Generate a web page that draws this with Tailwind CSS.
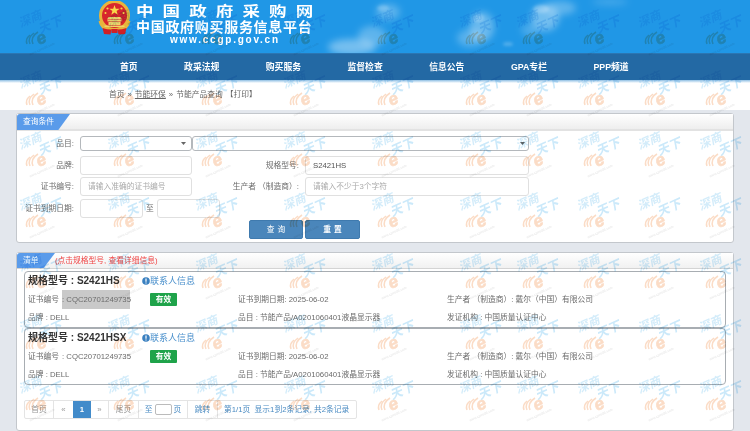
<!DOCTYPE html>
<html lang="zh-CN">
  <head>
    <meta charset="UTF-8" />
    <meta name="viewport" content="width=device-width, initial-scale=1.0" />
    <title>节能产品查询</title>
    <script src="https://cdn.jsdelivr.net/npm/@tailwindcss/browser@4"></script>
  </head>
  <body class="relative h-[431px] w-[750px] overflow-hidden bg-white text-[7.750px] leading-none text-[#6b6b6b] font-['Liberation_Sans','Noto_Sans_CJK_SC',sans-serif]">
    <!-- banner -->
    <header class="relative h-[53px] overflow-hidden bg-[#2097e6]">
      <svg class="absolute inset-0 h-full w-full" viewBox="0 0 750 53" aria-hidden="true">
        <defs>
          <filter id="soft"><feGaussianBlur stdDeviation="3.500" /></filter>
          <filter id="softer"><feGaussianBlur stdDeviation="1.800" /></filter>
        </defs>
        <g fill="#fff" filter="url(#soft)">
          <ellipse cx="352" cy="47" rx="24" ry="8" opacity=".38" />
          <ellipse cx="372" cy="36" rx="14" ry="10" opacity=".28" />
          <ellipse cx="388" cy="12" rx="12" ry="8" opacity=".26" />
          <ellipse cx="482" cy="27" rx="12" ry="15" opacity=".32" />
          <ellipse cx="470" cy="38" rx="13" ry="9" opacity=".25" />
          <ellipse cx="545" cy="18" rx="14" ry="13" opacity=".36" />
          <ellipse cx="560" cy="8" rx="16" ry="7" opacity=".28" />
          <ellipse cx="530" cy="30" rx="9" ry="6" opacity=".2" />
          <ellipse cx="610" cy="2" rx="18" ry="3" opacity=".18" />
        </g>
        <g fill="#fff" filter="url(#softer)">
          <ellipse cx="383" cy="8" rx="6" ry="3" opacity=".22" />
          <ellipse cx="478" cy="18" rx="6" ry="4" opacity=".22" />
          <ellipse cx="508" cy="44" rx="5" ry="2" opacity=".22" />
          <ellipse cx="541" cy="9" rx="8" ry="4" opacity=".25" />
        </g>
      </svg>
      <svg class="absolute left-[97px] top-[1px] h-[35px] w-[36px]" viewBox="0 0 36 35" aria-hidden="true">
        <circle cx="17.500" cy="14.500" r="14" fill="#d8262c" stroke="#e8b53c" stroke-width="3" />
        <path d="M3 20c1 5 5 9 10 10M32 20c-1 5-5 9-10 10" fill="none" stroke="#e8b53c" stroke-width="3" />
        <path d="M17.500 4l1.300 3.700h3.900l-3.100 2.400 1.100 3.700-3.200-2.200-3.200 2.200 1.100-3.700-3.100-2.400h3.900z" fill="#f8d84a" />
        <g fill="#f8d84a">
          <circle cx="10.500" cy="7.500" r="1.100" />
          <circle cx="24.500" cy="7.500" r="1.100" />
          <circle cx="8.500" cy="12" r="1" />
          <circle cx="26.500" cy="12" r="1" />
        </g>
        <path d="M11.500 16h12l1.500 2.500H10zM10.500 19h14v1.500h-14zM11.500 21h12v3h-12z" fill="#f3d36a" />
        <path d="M7.500 24.500h20V26h-20z" fill="#f3d36a" />
        <path d="M5.500 27c3 1 6 1.500 9 1.500l-1 5-6.500-.5zM29.500 27c-3 1-6 1.500-9 1.500l1 5 6.500-.5zM14.500 28h6v4h-6z" fill="#cf2027" />
      </svg>
      <div class="absolute left-[136px] top-[4px] origin-left scale-x-[1.250] text-[14px] font-bold tracking-[7.300px] text-white whitespace-nowrap">中国政府采购网</div>
      <div class="absolute left-[136px] top-[20px] text-[14px] font-bold tracking-[.700px] text-white whitespace-nowrap">中国政府购买服务信息平台</div>
      <div class="absolute left-[170px] top-[35px] text-[10px] font-bold tracking-[1.760px] text-white whitespace-nowrap">www.ccgp.gov.cn</div>
    </header>

    <nav class="flex h-[27px] items-center gap-[46.500px] border-t border-[#2b76b3] bg-[#2369a4] pl-[120px] text-[8.800px] font-bold text-white whitespace-nowrap">
      <a>首页</a><a>政采法规</a><a>购买服务</a><a>监督检查</a><a>信息公告</a><a>GPA专栏</a><a>PPP频道</a>
    </nav>
    <div class="h-[3px] bg-gradient-to-b from-[#8fbfe3] to-white"></div>

    <div class="flex h-[27px] items-center gap-[3px] pb-[3px] pl-[109px] text-[#666]">
      <span>首页</span><span>»</span><span class="underline">节能环保</span><span>»</span><span>节能产品查询</span><span>【打印】</span>
    </div>

    <main class="h-[321px] bg-[#e3e7ed] px-[16px] pt-[3px]">
      <!-- search form -->
      <section class="h-[130px] rounded-[3px] border border-[#c3c7cc] bg-white">
        <div class="h-[17px] border-b-2 border-[#e2e2e2] bg-gradient-to-b from-white to-[#eeeeee]">
          <div class="flex h-[16px] w-[53px] items-center rounded-tl-[3px] bg-[#5a9bea] pl-[6px] text-white [clip-path:polygon(0_0,100%_0,78%_100%,0_100%)]">查询条件</div>
        </div>
        <div class="mt-[5px] flex h-[15px] items-center">
          <label class="w-[58px] pr-[1px] text-right">品目:</label>
          <div class="ml-[5px] flex h-full w-[112px] items-center justify-end rounded-[3px] border border-[#b4b8bc] bg-white pr-[5px]">
            <svg class="h-[3px] w-[5px]" viewBox="0 0 5 3"><path d="M0 0h5L2.500 3z" fill="#666" /></svg>
          </div>
          <div class="flex h-full w-[337px] items-center justify-end rounded-[3px] border border-[#b4b8bc] bg-white pr-[3px]">
            <svg class="h-[3px] w-[5px]" viewBox="0 0 5 3"><path d="M0 0h5L2.500 3z" fill="#666" /></svg>
          </div>
        </div>
        <div class="mt-[5px] flex h-[19px] items-center">
          <label class="w-[58px] pr-[1px] text-right">品牌:</label>
          <input class="ml-[5px] h-full w-[112px] rounded-[3px] border border-[#e0e0e0] px-[7px]" />
          <label class="w-[108px] pr-[1px] text-right">规格型号:</label>
          <input class="ml-[5px] h-full w-[224px] rounded-[3px] border border-[#e0e0e0] px-[7px] text-[#555]" value="S2421HS" />
        </div>
        <div class="mt-[2px] flex h-[19px] items-center">
          <label class="w-[58px] pr-[1px] text-right">证书编号:</label>
          <input class="ml-[5px] h-full w-[112px] rounded-[3px] border border-[#e0e0e0] px-[7px] placeholder:text-[#aaa]" placeholder="请输入准确的证书编号" />
          <label class="w-[108px] pr-[1px] text-right">生产者 （制造商）:</label>
          <input class="ml-[5px] h-full w-[224px] rounded-[3px] border border-[#e0e0e0] px-[7px] placeholder:text-[#aaa]" placeholder="请输入不少于3个字符" />
        </div>
        <div class="mt-[3px] flex h-[19px] items-center">
          <label class="w-[58px] pr-[1px] text-right">证书到期日期:</label>
          <input class="ml-[5px] h-full w-[63px] rounded-[3px] border border-[#e0e0e0]" />
          <span class="w-[14px] text-center">至</span>
          <input class="h-full w-[63px] rounded-[3px] border border-[#e0e0e0]" />
        </div>
        <div class="mt-[2px] flex h-[19px] gap-[2px] pl-[232px]">
          <button class="w-[54px] rounded-[2px] border border-[#3f7aae] bg-[#4a86bb] pl-[3px] tracking-[3px] text-white">查询</button>
          <button class="w-[55px] rounded-[2px] border border-[#3f7aae] bg-[#4a86bb] pl-[3px] font-bold tracking-[3px] text-white">重置</button>
        </div>
      </section>

      <!-- result list -->
      <section class="mt-[9px] h-[179px] rounded-[3px] border border-[#c3c7cc] bg-white">
        <div class="flex h-[16px] items-center border-b border-[#d4d4d4] bg-gradient-to-b from-white to-[#f1f1f1]">
          <div class="flex h-full w-[38px] items-center rounded-tl-[3px] bg-[#5a9bea] pl-[6px] text-white [clip-path:polygon(0_0,100%_0,70%_100%,0_100%)]">清单</div>
          <span class="text-[#f04545]">(点击规格型号, 查看详细信息)</span>
        </div>
        <div class="mx-[7px] mt-[2px]">
          <article class="h-[57px] rounded-[4px] border border-[#a8adb2] px-[3px]">
            <div class="flex h-[18px] items-center">
              <h3 class="w-[114px] text-[10px] font-bold text-[#333] whitespace-nowrap">规格型号 : S2421HS</h3>
              <svg class="h-[8px] w-[8px] shrink-0" viewBox="0 0 8 8"><circle cx="4" cy="4" r="3.800" fill="#3a80c0" /><path d="M3.400 1.500h1.200v3.200H3.400zM3.400 5.400h1.200v1.200H3.400z" fill="#fff" /></svg>
              <span class="text-[9px] text-[#4a90cc]">联系人信息</span>
            </div>
            <div class="grid h-[19px] grid-cols-[210px_209px_1fr] items-center">
              <div class="flex items-center">
                <span>证书编号</span>
                <span class="ml-[3px] flex h-[19px] w-[68px] items-center bg-[#c9c9c9] whitespace-nowrap">: CQC20701249735</span>
                <span class="ml-[20px] flex h-[13px] w-[27px] items-center justify-center rounded-[1px] bg-[#1fa34a] font-bold text-white">有效</span>
              </div>
              <div>证书到期日期: 2025-06-02</div>
              <div>生产者 （制造商）: 戴尔（中国）有限公司</div>
            </div>
            <div class="grid h-[18px] grid-cols-[210px_209px_1fr] items-center">
              <div>品牌 : DELL</div>
              <div>品目 : 节能产品/A0201060401液晶显示器</div>
              <div>发证机构 : 中国质量认证中心</div>
            </div>
          </article>
          <article class="h-[57px] rounded-[4px] border border-[#a8adb2] px-[3px]">
            <div class="flex h-[18px] items-center">
              <h3 class="w-[114px] text-[10px] font-bold text-[#333] whitespace-nowrap">规格型号 : S2421HSX</h3>
              <svg class="h-[8px] w-[8px] shrink-0" viewBox="0 0 8 8"><circle cx="4" cy="4" r="3.800" fill="#3a80c0" /><path d="M3.400 1.500h1.200v3.200H3.400zM3.400 5.400h1.200v1.200H3.400z" fill="#fff" /></svg>
              <span class="text-[9px] text-[#4a90cc]">联系人信息</span>
            </div>
            <div class="grid h-[19px] grid-cols-[210px_209px_1fr] items-center">
              <div class="flex items-center">
                <span>证书编号</span>
                <span class="ml-[3px] flex w-[68px] items-center whitespace-nowrap">: CQC20701249735</span>
                <span class="ml-[20px] flex h-[13px] w-[27px] items-center justify-center rounded-[1px] bg-[#1fa34a] font-bold text-white">有效</span>
              </div>
              <div>证书到期日期: 2025-06-02</div>
              <div>生产者 （制造商）: 戴尔（中国）有限公司</div>
            </div>
            <div class="grid h-[18px] grid-cols-[210px_209px_1fr] items-center">
              <div>品牌 : DELL</div>
              <div>品目 : 节能产品/A0201060401液晶显示器</div>
              <div>发证机构 : 中国质量认证中心</div>
            </div>
          </article>
        </div>
        <div class="ml-[7px] mt-[15px] flex h-[19px] w-[333px] items-stretch rounded-[2px] border border-[#e4e4e4] text-[#999] whitespace-nowrap">
          <span class="flex w-[29px] items-center justify-center border-r border-[#e4e4e4]">首页</span>
          <span class="flex w-[19px] items-center justify-center">«</span>
          <span class="flex w-[18px] items-center justify-center bg-[#428bca] font-bold text-white">1</span>
          <span class="flex w-[18px] items-center justify-center border-r border-[#e4e4e4]">»</span>
          <span class="flex w-[30px] items-center justify-center border-r border-[#e4e4e4]">尾页</span>
          <span class="flex w-[49px] items-center justify-center gap-[2px] border-r border-[#e4e4e4] text-[#4a8bc2]">至<i class="h-[11px] w-[17px] rounded-[2px] border border-[#bbb] bg-white"></i>页</span>
          <span class="flex w-[30px] items-center justify-center border-r border-[#e4e4e4] text-[#4a8bc2]">跳转</span>
          <span class="flex flex-1 items-center pl-[6px] text-[#4a8bc2]">第1/1页&nbsp; 显示1到2条记录, 共2条记录</span>
        </div>
      </section>
    </main>

    <!-- site watermark laid over the whole page -->
    <svg class="pointer-events-none absolute inset-0 h-full w-full mix-blend-multiply" aria-hidden="true">
      <defs>
        <g id="mark" font-weight="700" font-style="italic" text-anchor="middle" dominant-baseline="central">
          <text transform="translate(18 11) rotate(-24)" font-size="12" fill="#d3ecfa">深商</text>
          <text transform="translate(38 17) rotate(-24)" font-size="12.500" fill="#cbe9fa">天下</text>
          <text transform="translate(29 30) rotate(-24)" font-size="17" stroke="#fbdcc6" stroke-width=".6" fill="#fbdcc6">e</text>
          <path d="M21 36q-3-7 5-12M18 36q-3-6 4-11M15 36q-2-5 3-9" fill="none" stroke="#fbdcc6" stroke-width="1.500" />
          <text transform="translate(30 41) rotate(-24)" font-size="3.400" font-style="normal" font-weight="400" fill="#e2e2e2">www.szms88.com</text>
        </g>
        <pattern id="wmLeft" x="12" y="8" width="88" height="61" patternUnits="userSpaceOnUse"><use href="#mark" /></pattern>
        <pattern id="wmRight" x="509" y="8" width="61" height="61" patternUnits="userSpaceOnUse"><use href="#mark" /></pattern>
      </defs>
      <rect width="509" height="431" fill="url(#wmLeft)" />
      <rect x="509" width="241" height="431" fill="url(#wmRight)" />
    </svg>
  </body>
</html>
